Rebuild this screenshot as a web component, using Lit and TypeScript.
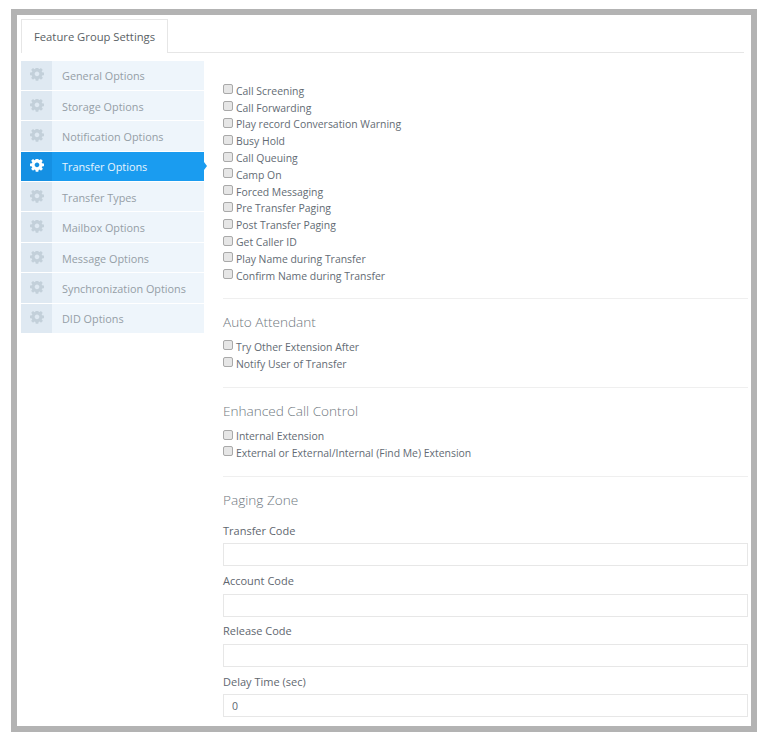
import { LitElement, html, css, svg } from "lit";
import { customElement } from "lit/decorators.js";

const cog = svg`<path d="M1024 640q0-106-75-181t-181-75-181 75-75 181 75 181 181 75 181-75 75-181zm512-109v222q0 12-8 23t-20 13l-185 28q-19 54-39 91 35 50 107 138 10 12 10 25t-9 23q-27 37-99 108t-94 71q-12 0-26-9l-138-108q-44 23-91 38-16 136-29 186-7 28-36 28h-222q-14 0-24.500-8.500t-11.500-21.500l-28-184q-49-16-90-37l-141 107q-10 9-25 9-14 0-25-11-126-114-165-168-7-10-7-23 0-12 8-23 15-21 51-66.500t54-70.500q-27-50-41-99l-183-27q-13-2-21-12.500t-8-23.500v-222q0-12 8-23t19-13l186-28q14-46 39-92-40-57-107-138-10-12-10-24 0-10 9-23 26-36 98.500-107.500t94.500-71.500q13 0 26 10l138 107q44-23 91-38 16-136 29-186 7-28 36-28h222q14 0 24.500 8.500t11.500 21.500l28 184q49 16 90 37l142-107q9-9 24-9 13 0 25 10 129 119 165 170 7 8 7 22 0 12-8 23-15 21-51 66.500t-54 70.500q26 50 41 98l183 28q13 2 21 12.500t8 23.500z"/>`;

const menu = ["General Options", "Storage Options", "Notification Options", "Transfer Options", "Transfer Types", "Mailbox Options", "Message Options", "Synchronization Options", "DID Options"];
const main = ["Call Screening", "Call Forwarding", "Play record Conversation Warning", "Busy Hold", "Call Queuing", "Camp On", "Forced Messaging", "Pre Transfer Paging", "Post Transfer Paging", "Get Caller ID", "Play Name during Transfer", "Confirm Name during Transfer"];
const auto = ["Try Other Extension After", "Notify User of Transfer"];
const enhanced = ["Internal Extension", "External or External/Internal (Find Me) Extension"];
const fields = [["Transfer Code", ""], ["Account Code", ""], ["Release Code", ""], ["Delay Time (sec)", "0"]];

@customElement("app-root")
export class AppRoot extends LitElement {
  static styles = css`
    :host { display: block; width: 768px; height: 744px; background: #fff; overflow: hidden;
      font-family: "Open Sans", sans-serif; font-size: 10.5px; color: #5d6670; }
    * { box-sizing: border-box; }
    .frame { width: 746px; height: 723px; margin: 9px 0 0 11px; border: 6px solid #b3b3b3; padding: 4px 0 0 4px; overflow: hidden; }
    .tabs { display: flex; height: 34px; margin-right: 7px; border-bottom: 1px solid #e6e6e6; }
    .tab { width: 147px; height: 34px; border: 1px solid #e6e6e6; border-bottom: none; background: #fff;
      font-size: 11.25px; color: #5a5f65; display: flex; align-items: center; padding-left: 12px; }
    .body { display: flex; }
    .side { width: 183px; margin-top: 7.5px; display: grid; grid-auto-rows: 29.4px; row-gap: 1px; flex: none; align-self: flex-start; }
    .row { position: relative; display: flex; align-items: center; background: #eef5fb; color: #959ea6; font-size: 10.85px; }
    .lbl { padding-top: 1px; }
    .ic { width: 31px; height: 100%; background: #dfe9f2; display: flex; align-items: center; justify-content: center; margin-right: 10px; }
    .ic svg { width: 14px; height: 14px; fill: #c3d0da; }
    .row.on { background: #1a9cf0; color: #e8f5fe; }
    .row.on .ic { background: #1590e3; }
    .row.on .ic svg { fill: #fff; }
    .row.on::after { content: ""; position: absolute; left: 100%; top: 10px; border-left: 3.5px solid #1a9cf0;
      border-top: 4.5px solid transparent; border-bottom: 4.5px solid transparent; }
    .main { width: 525px; margin-left: 19px; padding-top: 29.5px; }
    .check { display: flex; height: 16.8px; align-items: center; font-size: 10.43px; color: #636b74; }
    .check input { appearance: none; -webkit-appearance: none; width: 10px; height: 10px; margin: -3px 3px 0 0; padding: 0; flex: none;
      background: #e6e6e6; border: 1px solid #a9a9a9; border-radius: 2px; }
    hr { border: 0; border-top: 1px solid #efefef; margin: 0; }
    .first { margin-bottom: 13.5px; }
    h3 { margin: 0; font-weight: 300; font-size: 13.6px; line-height: 18px; color: #6f7880; }
    .sec { padding-bottom: 14.5px; }
    .sec h3 { margin: 14px 0 8px; }
    .sec.last { padding-bottom: 0; }
    .sec.last h3 { margin-bottom: 14px; }
    .field label { display: block; font-size: 11px; line-height: 16px; color: #5f676f; margin-bottom: 4.5px; }
    .field { margin-bottom: 6.8px; }
    .field input { display: block; width: 100%; height: 23px; border: 1px solid #e7e7e7; background: #fff; padding: 0 8px;
      font: 10.5px "Open Sans", sans-serif; color: #5d6670; outline: none; border-radius: 0; }
  `;

  private checks(items: string[]) {
    return items.map((t) => html`<label class="check"><input type="checkbox" />${t}</label>`);
  }

  render() {
    return html`<div class="frame">
      <div class="tabs"><div class="tab">Feature Group Settings</div></div>
      <div class="body">
        <nav class="side">
          ${menu.map((m, i) => html`<div class="row ${i === 3 ? "on" : ""}">
            <span class="ic"><svg viewBox="0 0 1536 1536">${cog}</svg></span><span class="lbl">${m}</span>
          </div>`)}
        </nav>
        <div class="main">
          <div class="first">${this.checks(main)}</div>
          <hr />
          <div class="sec"><h3>Auto Attendant</h3>${this.checks(auto)}</div>
          <hr />
          <div class="sec"><h3>Enhanced Call Control</h3>${this.checks(enhanced)}</div>
          <hr />
          <div class="sec last">
            <h3>Paging Zone</h3>
            ${fields.map(([l, v]) => html`<div class="field"><label>${l}</label><input type="text" .value=${v} /></div>`)}
          </div>
        </div>
      </div>
    </div>`;
  }
}
